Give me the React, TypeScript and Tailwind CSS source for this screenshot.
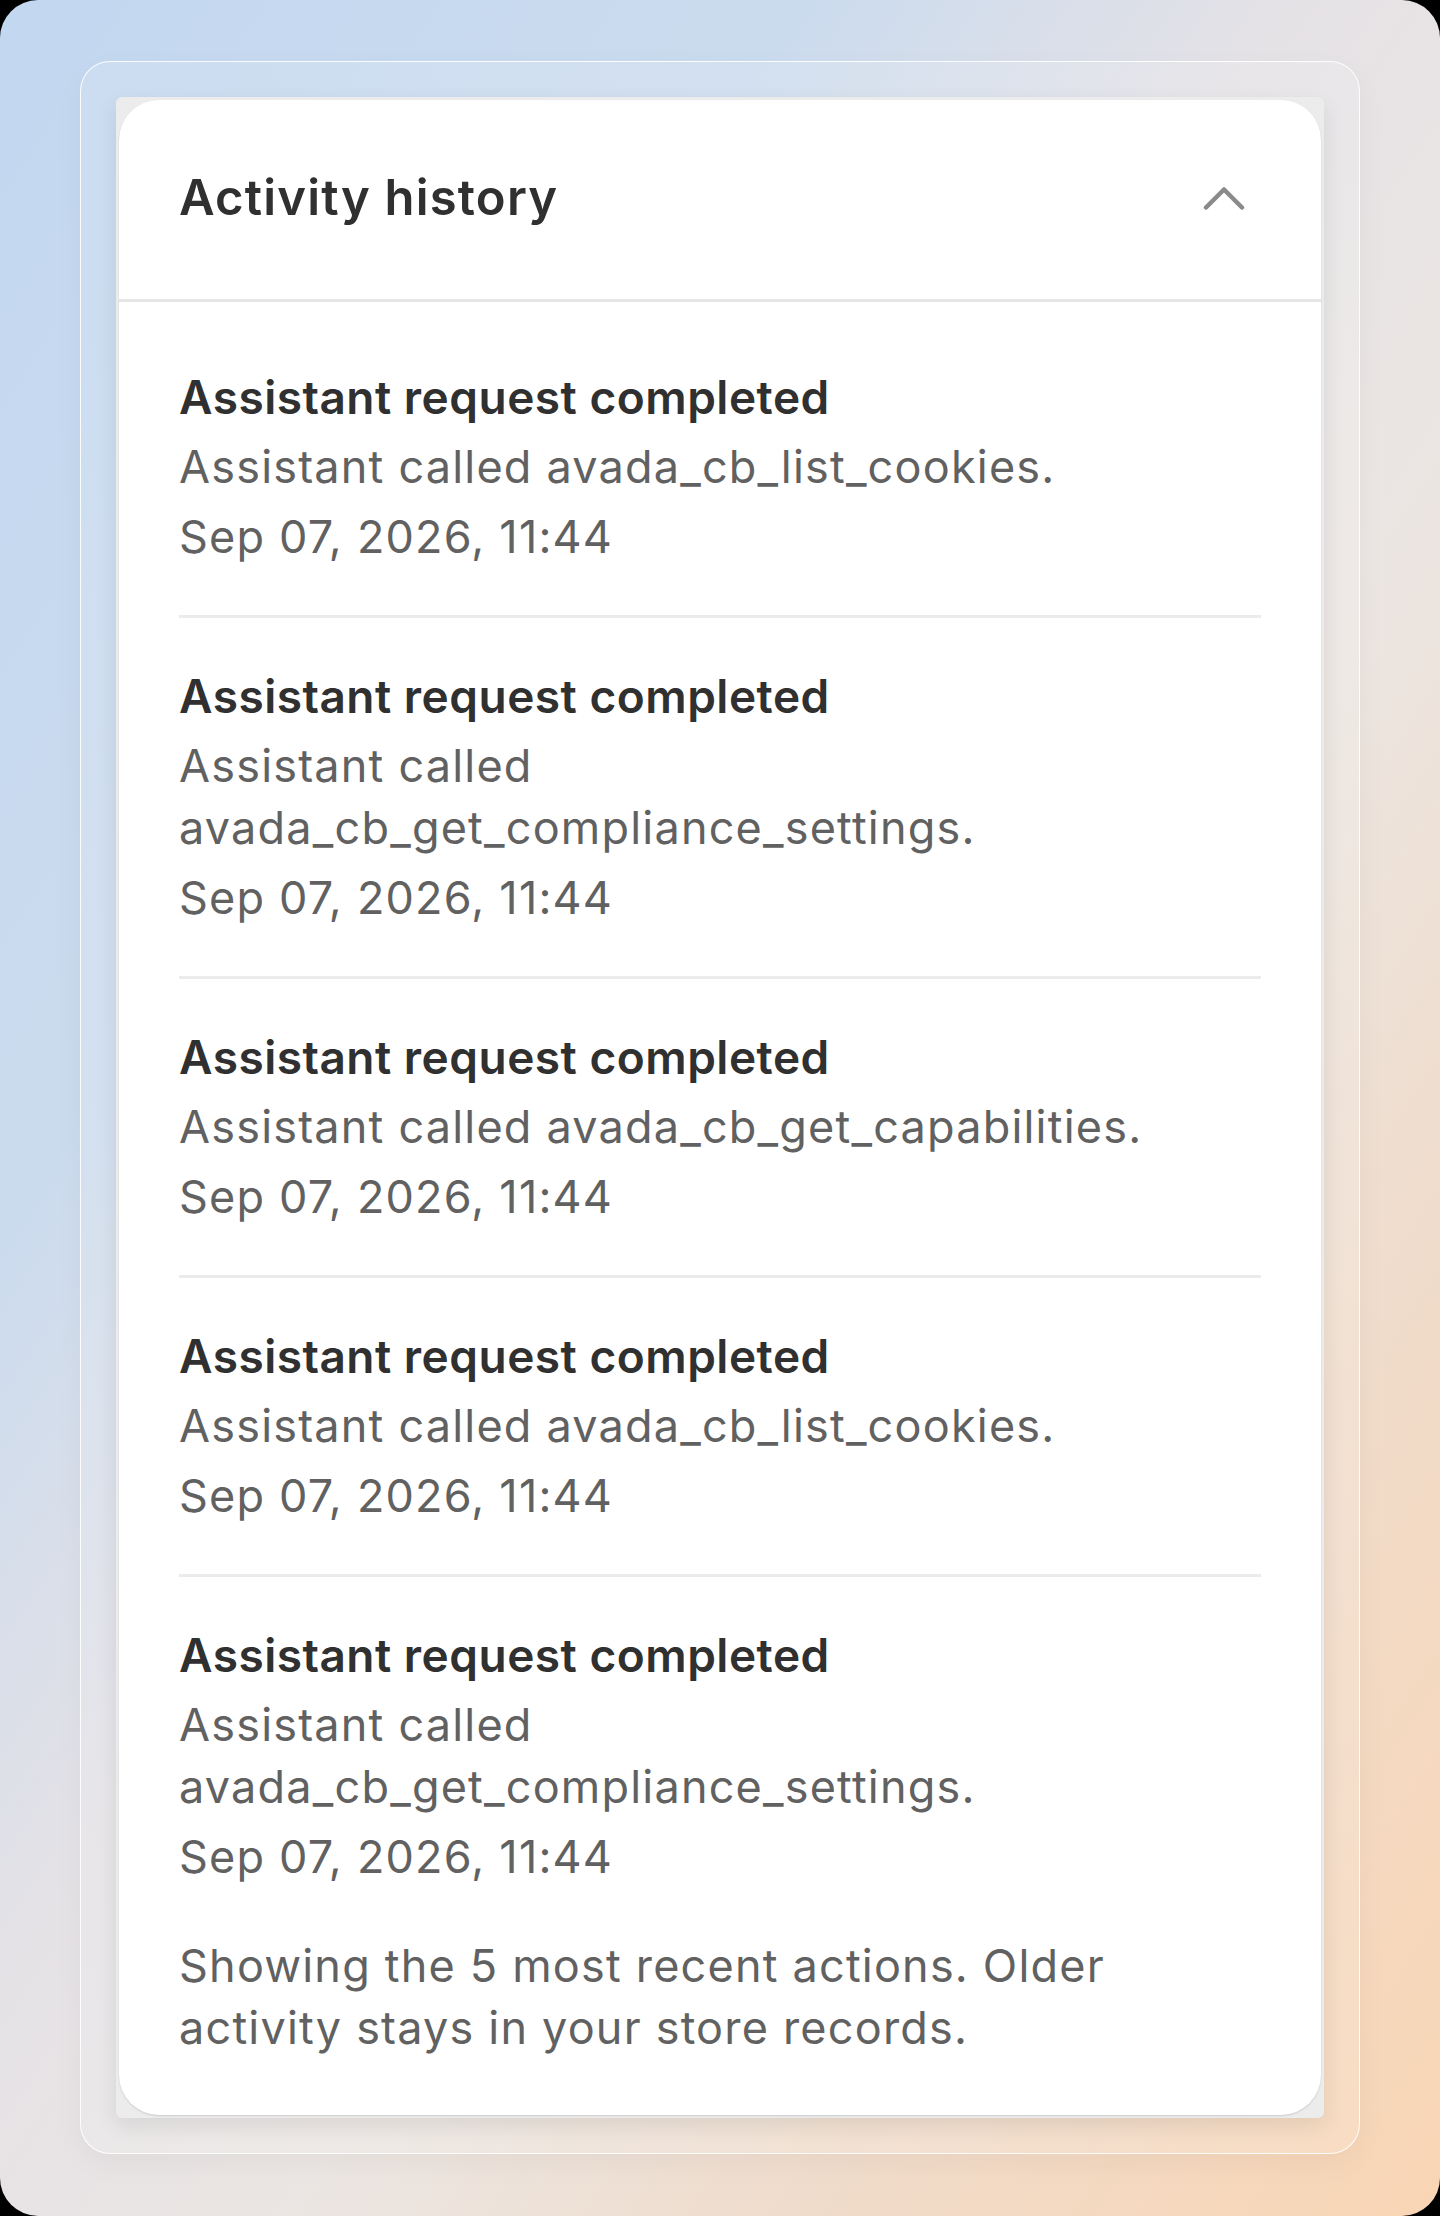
import { Fragment } from "react";

interface Activity {
  id: number;
  title: string;
  detail: string;
  time: string;
}

const activities: Activity[] = [
  { id: 1, title: "Assistant request completed", detail: "Assistant called avada_cb_list_cookies.", time: "Sep 07, 2026, 11:44" },
  { id: 2, title: "Assistant request completed", detail: "Assistant called avada_cb_get_compliance_settings.", time: "Sep 07, 2026, 11:44" },
  { id: 3, title: "Assistant request completed", detail: "Assistant called avada_cb_get_capabilities.", time: "Sep 07, 2026, 11:44" },
  { id: 4, title: "Assistant request completed", detail: "Assistant called avada_cb_list_cookies.", time: "Sep 07, 2026, 11:44" },
  { id: 5, title: "Assistant request completed", detail: "Assistant called avada_cb_get_compliance_settings.", time: "Sep 07, 2026, 11:44" },
];

function ChevronUp() {
  return (
    <svg width="42" height="26" viewBox="0 0 42 26" fill="none" aria-hidden="true">
      <path d="M3 22.5 L21 4.5 L39 22.5" stroke="#8a8a8a" strokeWidth="4.5" strokeLinecap="round" strokeLinejoin="round" />
    </svg>
  );
}

export default function App() {
  return (
    <div className="min-h-[2216px] w-[1440px] bg-black">
      <div className="flex min-h-[2216px] flex-col rounded-[38px] bg-[linear-gradient(to_bottom_right,#c2d7f0_0%,#cbdbee_28%,#e5e2e6_45%,#ebe6e3_60%,#f0dccb_78%,#f9d5b4_100%)] px-[80px] py-[61px] font-['Inter','Noto_Sans',sans-serif]">
        <div className="rounded-[30px] border-[1.5px] border-white/90 bg-white/15 p-[35px] shadow-[0_10px_30px_rgba(0,0,0,0.04)]">
          <div className="rounded-[6px] bg-[#ececec] p-[3px] shadow-[0_8px_22px_rgba(0,0,0,0.09)]">
            <div className="overflow-hidden rounded-[40px] bg-white shadow-[0_1px_2px_rgba(0,0,0,0.14)]">
              <div className="flex h-[199px] items-center justify-between pb-[3px] pl-[60px] pr-[76px]">
                <h2 className="text-[49px] font-semibold leading-[62px] tracking-[1.2px] text-[#303030]">Activity history</h2>
                <ChevronUp />
              </div>
              <div className="h-[3px] bg-[#e6e6e6]" />

              <div className="px-[60px] pt-[17px] pb-[56px] text-[45px] leading-[62px] tracking-[1.2px] text-[#616161]">
                {activities.map((a, i) => (
                  <Fragment key={a.id}>
                    <div className="flex flex-col gap-[8px] py-[47px]">
                      <div className="text-[46px] font-semibold tracking-[0.5px] text-[#303030]">{a.title}</div>
                      <div>{a.detail}</div>
                      <div>{a.time}</div>
                    </div>
                    {i < activities.length - 1 && <div className="h-[3px] bg-[#ebebeb]" />}
                  </Fragment>
                ))}
                <p className="max-w-[1010px]">
                  Showing the 5 most recent actions. Older activity stays in your store records.
                </p>
              </div>
            </div>
          </div>
        </div>
      </div>
    </div>
  );
}
